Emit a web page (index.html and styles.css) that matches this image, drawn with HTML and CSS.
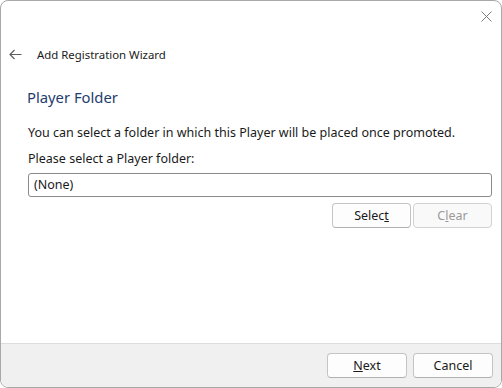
FILE: index.html
```html
<!DOCTYPE html>
<html lang="en">
<head>
  <meta charset="UTF-8" />
  <title>Add Registration Wizard</title>
  <link rel="stylesheet" href="styles.css">
</head>
<body>
  <div class="window">
    <div class="caption">
      <button class="close" aria-label="Close">
        <svg width="11" height="11" viewBox="0 0 11 11"><path d="M0.5 0.5 L10.5 10.5 M10.5 0.5 L0.5 10.5" stroke="#7a7a7a" stroke-width="1" fill="none"/></svg>
      </button>
    </div>
    <div class="header">
      <svg class="back" width="13" height="11" viewBox="0 0 13 11"><path d="M12.5 5.5 H1 M5.5 1 L1 5.5 L5.5 10" stroke="#5f5f5f" stroke-width="1.2" fill="none"/></svg>
      <span class="title">Add Registration Wizard</span>
    </div>
    <main class="content">
      <h2>Player Folder</h2>
      <p>You can select a folder in which this Player will be placed once promoted.</p>
      <p class="label">Please select a Player folder:</p>
      <div class="field">(None)</div>
      <div class="row">
        <button class="btn">Selec<u>t</u></button>
        <button class="btn" disabled>C<u>l</u>ear</button>
      </div>
    </main>
    <footer class="footer">
      <button class="btn wide"><u>N</u>ext</button>
      <button class="btn wide">Cancel</button>
    </footer>
  </div>
</body>
</html>
```

FILE: styles.css
```css
body {
  margin: 0;
  font-family: 'Noto Sans', 'Open Sans', sans-serif;
  font-size: 12.5px;
  color: #1a1a1a;
  background: #ffffff;
}

.window {
  width: 502px;
  height: 388px;
  box-sizing: border-box;
  border: 1px solid #a8a8a8;
  border-radius: 8px;
  display: flex;
  flex-direction: column;
  overflow: hidden;
  background: #ffffff;
}

.caption {
  height: 30px;
  display: flex;
  justify-content: flex-end;
  align-items: center;
  padding-right: 9px;
}

.close {
  border: none;
  background: none;
  padding: 0;
  width: 11px;
  height: 11px;
  display: flex;
}

.header {
  height: 46px;
  display: flex;
  align-items: center;
  padding-left: 8px;
}

.back {
  margin-right: 15px;
}

.title {
  font-size: 11.4px;
  color: #1a1a1a;
}

.content {
  flex: 1;
  padding: 0 9px 0 26px;
}

.content h2 {
  margin: 8px 0 0;
  height: 39px;
  line-height: 24px;
  font-size: 14.8px;
  font-weight: 400;
  color: #1e3d6d;
}

.content p {
  margin: 0 0 8px 1px;
  line-height: 18px;
}

.content p.label {
  margin-bottom: 5px;
}

.field {
  height: 24px;
  box-sizing: border-box;
  border: 1px solid #8a8a8a;
  border-radius: 3px;
  padding: 0 5px;
  line-height: 22px;
  margin: 0 0 6px 1px;
}

.row {
  display: flex;
  justify-content: flex-end;
  gap: 2px;
}

.btn {
  width: 79px;
  height: 25px;
  font-family: inherit;
  font-size: 12.5px;
  color: #1a1a1a;
  background: #fdfdfd;
  border: 1px solid #c4c4c4;
  border-bottom-color: #b0b0b0;
  border-radius: 4px;
  padding: 0;
}

.btn:disabled {
  color: #9a9a9a;
  background: #f9f9f9;
  border-color: #d2d2d2;
}

.footer {
  height: 43px;
  background: #f0f0f0;
  border-top: 1px solid #dcdcdc;
  display: flex;
  justify-content: flex-end;
  align-items: center;
  gap: 6px;
  padding-right: 8px;
}

.btn.wide {
  width: 80px;
  height: 25px;
}
```
